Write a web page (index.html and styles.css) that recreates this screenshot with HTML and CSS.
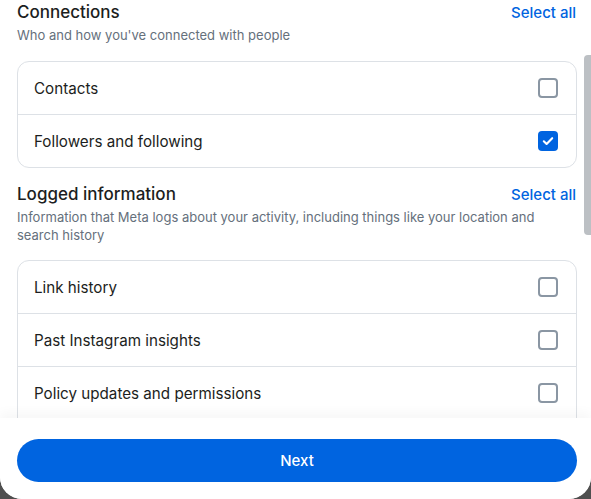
FILE: index.html
```html
<!DOCTYPE html>
<html>
<head>
<meta charset="utf-8">
<link rel="stylesheet" href="styles.css">
</head>
<body>
<div class="modal">
  <div class="scroll">
    <section class="section">
      <div class="head">
        <h2 class="title">Connections</h2>
        <span class="link">Select all</span>
      </div>
      <p class="desc">Who and how you've connected with people</p>
      <div class="card">
        <div class="row"><span class="label">Contacts</span><span class="box"></span></div>
        <div class="row"><span class="label">Followers and following</span><span class="box checked"><svg viewBox="0 0 20 20" width="20" height="20"><path d="M5.8 10.3l2.8 2.7 5.6-5.8" fill="none" stroke="#fff" stroke-width="2.1" stroke-linecap="round" stroke-linejoin="round"/></svg></span></div>
      </div>
    </section>
    <section class="section second">
      <div class="head">
        <h2 class="title">Logged information</h2>
        <span class="link">Select all</span>
      </div>
      <p class="desc">Information that Meta logs about your activity, including things like your location and search history</p>
      <div class="card">
        <div class="row"><span class="label">Link history</span><span class="box"></span></div>
        <div class="row"><span class="label">Past Instagram insights</span><span class="box"></span></div>
        <div class="row"><span class="label">Policy updates and permissions</span><span class="box"></span></div>
        <div class="row"></div>
      </div>
    </section>
    <div class="scrollbar"></div>
  </div>
  <div class="footer">
    <button class="next">Next</button>
  </div>
</div>
</body>
</html>
```
FILE: styles.css
```css
html, body {
  margin: 0;
  padding: 0;
  background: #4f4f4f;
}
body {
  font-family: Inter, "Noto Sans", sans-serif;
  color: #1c2b33;
}
.modal {
  width: 591px;
  height: 499px;
  background: #fff;
  border-radius: 0 0 22px 22px;
  display: flex;
  flex-direction: column;
  overflow: hidden;
}
.scroll {
  position: relative;
  flex: 1;
  overflow: hidden;
  padding: 0 14px 0 17px;
}
.section {
  padding-top: 1px;
}
.second {
  padding-top: 15px;
}
.head {
  display: flex;
  justify-content: space-between;
  align-items: center;
  height: 22px;
  padding-right: 1px;
}
.title {
  margin: 0;
  font-size: 17px;
  font-weight: 500;
  color: #1c1e21;
}
.link {
  font-size: 15px;
  font-weight: 500;
  color: #0064e0;
}
.desc {
  margin: 3px 0 0;
  font-size: 13px;
  line-height: 18px;
  color: #65707c;
  max-width: 540px;
}
.card {
  margin-top: 17px;
  border: 1px solid #dde1e6;
  border-radius: 12px;
}
.second .card {
  margin-top: 16px;
}
.row {
  display: flex;
  align-items: center;
  justify-content: space-between;
  height: 52px;
  padding: 0 18px 0 16px;
  border-top: 1px solid #dde1e6;
}
.row:first-child {
  border-top: none;
}
.label {
  font-size: 15.2px;
  color: #1c1e21;
}
.box {
  width: 16px;
  height: 16px;
  border: 2px solid #8a96a3;
  border-radius: 4px;
  display: flex;
}
.box.checked {
  width: 20px;
  height: 20px;
  border: none;
  background: #0064e0;
}
.scrollbar {
  position: absolute;
  right: 0;
  top: 55px;
  width: 7px;
  height: 180px;
  background: #bcc0c4;
  border-radius: 4px 0 0 4px;
}
.footer {
  height: 81px;
  background: #fff;
  box-shadow: 0 -6px 10px rgba(0, 0, 0, 0.03);
  position: relative;
  padding: 21px 14px 0 17px;
  box-sizing: border-box;
}
.next {
  width: 100%;
  height: 43px;
  border: none;
  border-radius: 22px;
  background: #0064e0;
  color: #fff;
  font-family: Inter, "Noto Sans", sans-serif;
  font-size: 15px;
  font-weight: 500;
}
```
